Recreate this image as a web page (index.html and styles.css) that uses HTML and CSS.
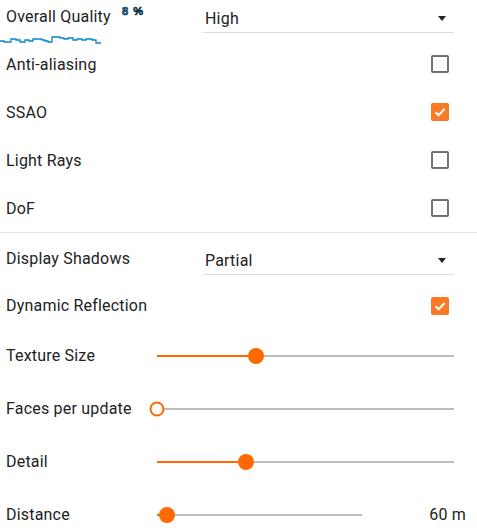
FILE: index.html
```html
<!DOCTYPE html>
<html>
<head>
<meta charset="utf-8">
<link rel="stylesheet" href="styles.css">
</head>
<body>
<div class="stats">
  <span class="stats-num">8 %</span>
  <svg class="stats-graph" width="102" height="14" viewBox="0 0 102 14">
    <polyline fill="none" stroke="#0a86c8" stroke-width="1.3" points="0,7 4,7 4,8 11,8 11,5 16,5 16,6 20,6 20,8 25,8 25,6 29,6 29,7 33,7 33,5 42,5 42,6 45,6 45,7 48,7 48,8 52,8 52,3 60,3 60,4 64,4 64,5 68,5 68,4 73,4 73,6 77,6 77,5 82,5 82,6 86,6 86,5 92,5 92,6 96,6 96,9 101,9"/>
  </svg>
</div>
<div class="panel">
  <section class="group">
    <div class="row">
      <span class="label">Overall Quality</span>
      <div class="select"><span>High</span><span class="arrow"></span></div>
    </div>
    <div class="row">
      <span class="label">Anti-aliasing</span>
      <span class="check"></span>
    </div>
    <div class="row">
      <span class="label">SSAO</span>
      <span class="check on"><svg viewBox="0 0 18 18" width="18" height="18"><path d="M4.5 9.3 L7.6 12.3 L13.6 6" fill="none" stroke="#fff" stroke-width="2"/></svg></span>
    </div>
    <div class="row">
      <span class="label">Light Rays</span>
      <span class="check"></span>
    </div>
    <div class="row">
      <span class="label">DoF</span>
      <span class="check"></span>
    </div>
  </section>
  <section class="group second">
    <div class="row">
      <span class="label">Display Shadows</span>
      <div class="select"><span>Partial</span><span class="arrow"></span></div>
    </div>
    <div class="row short">
      <span class="label">Dynamic Reflection</span>
      <span class="check on"><svg viewBox="0 0 18 18" width="18" height="18"><path d="M4.5 9.3 L7.6 12.3 L13.6 6" fill="none" stroke="#fff" stroke-width="2"/></svg></span>
    </div>
    <div class="row slider-row">
      <span class="label slabel">Texture Size</span>
      <div class="track"><div class="fill" style="width:33.4%"></div><div class="thumb" style="left:33.4%"></div></div>
    </div>
    <div class="row slider-row">
      <span class="label slabel">Faces per update</span>
      <div class="track"><div class="thumb empty" style="left:0%"></div></div>
    </div>
    <div class="row slider-row">
      <span class="label slabel">Detail</span>
      <div class="track"><div class="fill" style="width:30%"></div><div class="thumb" style="left:30%"></div></div>
    </div>
    <div class="row slider-row">
      <span class="label slabel">Distance</span>
      <div class="track short-track"><div class="fill" style="width:5%"></div><div class="thumb" style="left:5%"></div></div>
      <span class="value">60 m</span>
    </div>
  </section>
</div>
</body>
</html>
```

FILE: styles.css
```css
html, body {
  margin: 0;
  padding: 0;
  background: #fff;
  overflow: hidden;
}
body {
  font-family: Roboto, "Liberation Sans", sans-serif;
  font-size: 16px;
  letter-spacing: 0.2px;
  color: #222;
  position: relative;
  width: 477px;
  height: 528px;
}
.stats {
  position: absolute;
  left: 0;
  top: 0;
  width: 150px;
  height: 50px;
  z-index: 2;
  pointer-events: none;
}
.stats-num {
  position: absolute;
  left: 122px;
  top: 5px;
  font-family: "Liberation Sans", sans-serif;
  font-weight: bold;
  font-size: 11px;
  letter-spacing: 1px;
  color: #2a9fe6;
  -webkit-text-stroke: 0.7px #08263a;
}
.stats-graph {
  position: absolute;
  left: 0;
  top: 34px;
}
.panel {
  padding: 0 23px 0 6px;
  margin-top: -8px;
}
.group.second {
  border-top: 1px solid #e2e2e2;
  margin-right: -23px;
  margin-left: -6px;
  padding: 1px 23px 0 6px;
}
.row {
  height: 48px;
  display: flex;
  align-items: center;
}
.row.short {
  height: 47px;
}
.row.slider-row {
  height: 53px;
}
.label {
  width: 197px;
  flex: none;
  white-space: nowrap;
}
.label.slabel {
  width: 151px;
}
.select {
  flex: 1;
  display: flex;
  align-items: center;
  justify-content: space-between;
  margin-top: 4px;
  padding: 6px 8px 4px 2px;
  line-height: 18px;
  border-bottom: 1px solid #dcdcdc;
}
.arrow {
  width: 0;
  height: 0;
  border-left: 4px solid transparent;
  border-right: 4px solid transparent;
  border-top: 5px solid #222;
}
.check {
  margin-left: auto;
  margin-right: 5px;
  width: 18px;
  height: 18px;
  box-sizing: border-box;
  border: 2px solid #727272;
  border-radius: 2px;
  display: flex;
}
.check.on {
  border: none;
  background: #fb7a26;
}
.track {
  position: relative;
  flex: 1;
  height: 2px;
  background: #bdbdbd;
  margin-top: 1px;
}
.track.short-track {
  flex: none;
  width: 205px;
}
.fill {
  position: absolute;
  left: 0;
  top: 0;
  height: 2px;
  background: #ff6a00;
}
.thumb {
  position: absolute;
  top: 1px;
  width: 16px;
  height: 16px;
  border-radius: 50%;
  background: #ff6a00;
  transform: translate(-50%, -50%);
}
.thumb.empty {
  width: 15px;
  height: 15px;
  box-sizing: border-box;
  background: #fff;
  border: 2px solid #ff6a00;
}
.value {
  flex: 1;
  text-align: right;
  margin-right: -12px;
}
```
